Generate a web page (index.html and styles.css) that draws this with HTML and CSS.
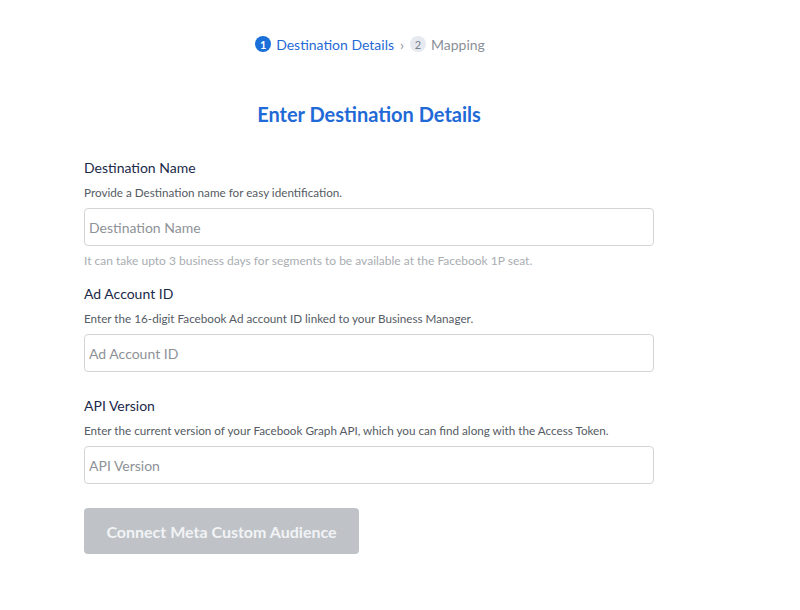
FILE: index.html
```html
<!DOCTYPE html>
<html lang="en">
<head>
  <meta charset="UTF-8">
  <meta name="viewport" content="width=device-width, initial-scale=1.0">
  <title>Destination</title>
  <link rel="stylesheet" href="styles.css">
</head>
<body>
 <div class="page">
   <div class="steps">
     <span class="step active"><span class="num">1</span>Destination Details</span>
     <span class="chev">&rsaquo;</span>
     <span class="step"><span class="num">2</span>Mapping</span>
   </div>
   <h1 class="title">Enter Destination Details</h1>
   <form class="form">
     <div class="field with-hint">
       <label class="label">Destination Name</label>
       <p class="desc">Provide a Destination name for easy identification.</p>
       <input class="input" type="text" placeholder="Destination Name">
       <p class="hint">It can take upto 3 business days for segments to be available at the Facebook 1P seat.</p>
     </div>
     <div class="field">
       <label class="label">Ad Account ID</label>
       <p class="desc">Enter the 16-digit Facebook Ad account ID linked to your Business Manager.</p>
       <input class="input" type="text" placeholder="Ad Account ID">
     </div>
     <div class="field">
       <label class="label">API Version</label>
       <p class="desc">Enter the current version of your Facebook Graph API, which you can find along with the Access Token.</p>
       <input class="input" type="text" placeholder="API Version">
     </div>
     <button class="btn" type="button" disabled>Connect Meta Custom Audience</button>
   </form>
 </div>
</body>
</html>
```

FILE: styles.css
```css
body{
  margin: 0;
  background: #fff;
  font-family: Lato, "Open Sans", sans-serif;
  color: #1b2a4a;
}
.page{
  width: 570px;
  margin-left: 84px;
  padding-top: 34px;
}
.steps{
  display: flex;
  justify-content: center;
  align-items: center;
  gap: 6px;
  font-size: 14px;
  color: #8a8f98;
  height: 20px;
  padding-left: 2px;
}
.step{
  display: flex;
  align-items: center;
  gap: 5px;
}
.num{
  width: 16px;
  height: 16px;
  border-radius: 50%;
  background: #e6eaf0;
  color: #7b818b;
  font-size: 11px;
  display: flex;
  align-items: center;
  justify-content: center;
}
.step.active{
  color: #1f6ad6;
}
.step.active .num{
  background: #1a6fd8;
  color: #fff;
  font-weight: 700;
}
.chev{
  font-size: 14px;
  color: #8a8f98;
}
.title{
  margin: 44px 0 0;
  text-align: center;
  font-size: 20px;
  font-weight: 700;
  color: #1f6ad6;
  line-height: 32px;
}
.form{
  margin-top: 28px;
}
.field{
  margin-bottom: 24px;
}
.field.with-hint{
  margin-bottom: 15px;
}
.label{
  display: block;
  font-size: 14px;
  line-height: 20px;
  color: #1b2a4a;
}
.desc{
  margin: 5px 0 7px;
  font-size: 11.7px;
  line-height: 18px;
  color: #555b63;
}
.input{
  display: block;
  box-sizing: border-box;
  width: 100%;
  height: 38px;
  padding: 0 4px;
  border: 1px solid #d2d4d7;
  border-radius: 4px;
  font-family: inherit;
  font-size: 14px;
  color: #333;
  background: #fff;
}
.input::placeholder{
  color: #8e9297;
}
.hint{
  margin: 7px 0 0;
  font-size: 12px;
  line-height: 16px;
  color: #a9adb2;
}
.btn{
  margin-top: 0;
  width: 275px;
  height: 46px;
  border: none;
  border-radius: 4px;
  background: #bfc3c8;
  color: #f2f3f5;
  font-family: inherit;
  font-size: 16px;
  font-weight: 700;
}
```
